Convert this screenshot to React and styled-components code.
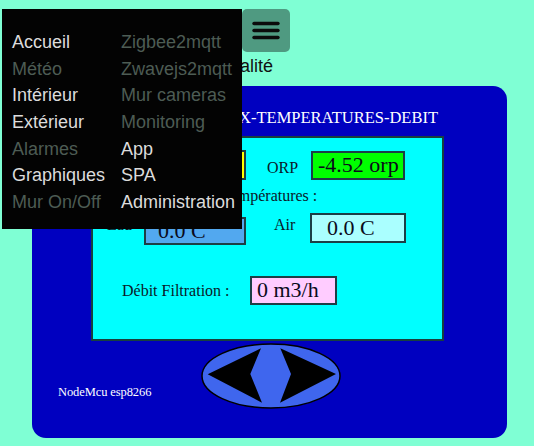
import React from "react";
import styled, { createGlobalStyle } from "styled-components";

const Global = createGlobalStyle`
  html, body { margin: 0; padding: 0; }
  body {
    background: #7fffd4;
    width: 534px;
    height: 446px;
    overflow: hidden;
  }
  * { box-sizing: border-box; }
`;

const Page = styled.div`
  position: relative;
  width: 534px;
  height: 446px;
`;

const Header = styled.header`
  display: flex;
  padding: 9px 0 0 242px;
`;

const MenuButton = styled.button`
  width: 48px;
  height: 43px;
  border: none;
  border-radius: 5px;
  background: #4f9a81;
  display: flex;
  align-items: center;
  justify-content: center;
  padding: 0;
`;

const Subtitle = styled.div`
  width: 273px;
  margin-top: 4px;
  text-align: right;
  font-family: "Liberation Sans", Arial, sans-serif;
  font-size: 18px;
  line-height: 21px;
  color: #111;
`;

const Panel = styled.section`
  margin: 9px 0 0 32px;
  width: 475px;
  height: 352px;
  border-radius: 14px;
  background: #0000c0;
  padding-top: 22px;
  display: flex;
  flex-direction: column;
`;

const PanelTitle = styled.div`
  text-align: right;
  padding-right: 69px;
  color: #fff;
  font-family: "Liberation Serif", "Times New Roman", serif;
  font-size: 16.5px;
  line-height: 20px;
  height: 20px;
  white-space: nowrap;
`;

const Screen = styled.div`
  margin: 8px 0 0 59px;
  width: 353px;
  height: 205px;
  background: #00ffff;
  border: 2px solid #17403f;
  display: flex;
  flex-direction: column;
`;

const Row = styled.div`
  display: flex;
  align-items: flex-start;
  margin-top: ${(p) => p.$mt || 0}px;
`;

const Label = styled.span`
  display: block;
  flex: none;
  width: ${(p) => (p.$w ? `${p.$w}px` : "auto")};
  margin-left: ${(p) => p.$ml || 0}px;
  margin-top: ${(p) => p.$mt || 0}px;
  font-family: "Liberation Serif", "Times New Roman", serif;
  font-size: 16px;
  line-height: 20px;
  color: #0a1a2a;
  white-space: nowrap;
`;

const ValueBox = styled.div`
  flex: none;
  width: ${(p) => p.$w}px;
  height: ${(p) => p.$h}px;
  margin-top: ${(p) => p.$mt || 0}px;
  background: ${(p) => p.$bg};
  border: 2px solid #1c3f46;
  padding-left: ${(p) => p.$pad || 5}px;
  font-family: "Liberation Serif", "Times New Roman", serif;
  font-size: 22px;
  line-height: ${(p) => p.$h - 5}px;
  color: #0a0a1a;
  white-space: nowrap;
`;

const Footer = styled.div`
  display: flex;
  align-items: flex-start;
  margin-top: 2px;
`;

const Board = styled.div`
  width: 169px;
  padding-left: 26px;
  margin-top: 42px;
  color: #fff;
  font-family: "Liberation Serif", "Times New Roman", serif;
  font-size: 12.5px;
  line-height: 15px;
  letter-spacing: -0.1px;
`;

const Menu = styled.nav`
  position: absolute;
  left: 2px;
  top: 9px;
  width: 240px;
  height: 220px;
  background: #030303;
  padding: 20px 0 0 10px;
  display: grid;
  grid-template-columns: 109px auto;
  grid-template-rows: repeat(7, 26.7px);
  grid-auto-flow: column;
`;

const MenuItem = styled.a`
  font-family: "Liberation Sans", Arial, sans-serif;
  font-size: 18px;
  line-height: 26.7px;
  color: ${(p) => (p.$dim ? "#4d5c54" : "#dcdcdc")};
  text-decoration: none;
  white-space: nowrap;
`;

const menu = [
  ["Accueil", false],
  ["Météo", true],
  ["Intérieur", false],
  ["Extérieur", false],
  ["Alarmes", true],
  ["Graphiques", false],
  ["Mur On/Off", true],
  ["Zigbee2mqtt", true],
  ["Zwavejs2mqtt", true],
  ["Mur cameras", true],
  ["Monitoring", true],
  ["App", false],
  ["SPA", false],
  ["Administration", false],
];

function Burger() {
  return (
    <svg width="28" height="20" viewBox="0 0 28 20">
      <g stroke="#0b0b0b" strokeWidth="3.4" strokeLinecap="round">
        <line x1="2" y1="2.5" x2="26" y2="2.5" />
        <line x1="2" y1="9.5" x2="26" y2="9.5" />
        <line x1="2" y1="16.5" x2="26" y2="16.5" />
      </g>
    </svg>
  );
}

function NavPad() {
  return (
    <svg width="140" height="67" viewBox="0 0 140 67">
      <ellipse cx="70" cy="33" rx="69" ry="32" fill="#3f66ee" stroke="#000" strokeWidth="1.5" />
      <polygon points="6.7,31.3 60,5.3 49.3,31 61,59.7" fill="#000" />
      <polygon points="79.3,5.3 90,31 79,59.7 135,31" fill="#000" />
    </svg>
  );
}

export default function App() {
  return (
    <Page>
      <Global />
      <Header>
        <MenuButton aria-label="menu">
          <Burger />
        </MenuButton>
      </Header>
      <Subtitle>Fonctionnalité</Subtitle>
      <Panel>
        <PanelTitle>MESURES PH-REDOX-TEMPERATURES-DEBIT</PanelTitle>
        <Screen>
          <Row $mt={12}>
            <Label $ml={14} $w={43} $mt={5}>pH</Label>
            <ValueBox $w={96} $h={30} $bg="#ffff00" $pad={12}>7.00</ValueBox>
            <Label $ml={21} $w={44} $mt={8}>ORP</Label>
            <ValueBox $w={94} $h={29} $mt={1} $bg="#00ff00" $pad={5}>-4.52 orp</ValueBox>
          </Row>
          <Row $mt={6}>
            <Label $ml={129}>Températures :</Label>
          </Row>
          <Row $mt={7}>
            <Label $ml={14} $w={37} $mt={2}>Eau</Label>
            <ValueBox $w={102} $h={28} $mt={4} $bg="#52a8ef" $pad={12}>0.0 C</ValueBox>
            <Label $ml={28} $w={36} $mt={2}>Air</Label>
            <ValueBox $w={96} $h={30} $bg="#aaffff" $pad={15}>0.0 C</ValueBox>
          </Row>
          <Row $mt={31}>
            <Label $ml={29} $w={128} $mt={5}>Débit Filtration :</Label>
            <ValueBox $w={87} $h={29} $bg="#ffccff" $pad={5}>0 m3/h</ValueBox>
          </Row>
        </Screen>
        <Footer>
          <Board>NodeMcu esp8266</Board>
          <NavPad />
        </Footer>
      </Panel>
      <Menu>
        {menu.map(([t, dim]) => (
          <MenuItem key={t} href="#" $dim={dim}>
            {t}
          </MenuItem>
        ))}
      </Menu>
    </Page>
  );
}
